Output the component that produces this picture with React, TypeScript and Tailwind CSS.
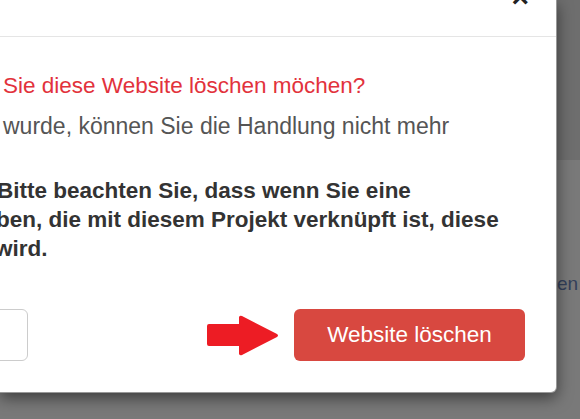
import * as React from "react";

function Arrow() {
  return (
    <svg width="72" height="41" viewBox="0 0 72 41" className="shrink-0">
      <path
        d="M2 9 H32 V2 Q33 0 35 1 L70 19 Q72 20.5 70 22 L35 40 Q33 41 32 39 V31 H2 Q0 31 0 29 V11 Q0 9 2 9 Z"
        fill="#ed1c24"
      />
    </svg>
  );
}

export default function App() {
  return (
    <div className="relative w-[580px] h-[419px] overflow-hidden bg-[#797979] font-['Liberation_Sans',Arial,sans-serif]">
      {/* page behind the overlay */}
      <div className="flex flex-col h-full">
        <div className="h-[160px] bg-[#6e6e6e]" />
        <div className="flex-1 pt-[114px] pl-[557px] text-[19px] leading-none text-[#33405a]">en</div>
      </div>

      {/* modal */}
      <div className="absolute left-0 top-0 w-[557px] h-[393px] bg-white rounded-br-[6px] border-r border-b border-black/40 shadow-[0_5px_15px_rgba(0,0,0,0.5)] flex flex-col">
        <div className="h-[37px] border-b border-[#e5e5e5] flex justify-end pr-[27px] shrink-0">
          <span className="-mt-[18px] text-[30px] font-bold leading-none text-[#222]">×</span>
        </div>

        <div className="pl-[3px] pt-[36px] flex flex-col">
          <p className="text-[22.5px] leading-[26px] text-[#e2323c] whitespace-nowrap">
            Sie diese Website löschen möchen?
          </p>
          <p className="mt-[14px] text-[23px] leading-[26px] text-[#555] whitespace-nowrap">
            wurde, können Sie die Handlung nicht mehr
          </p>
        </div>

        <div className="mt-[37px] flex flex-col text-[22.5px] leading-[29px] font-bold text-[#333] whitespace-nowrap">
          <p className="-ml-[3px]">Bitte beachten Sie, dass wenn Sie eine</p>
          <p className="-ml-[4px]">ben, die mit diesem Projekt verknüpft ist, diese</p>
          <p className="-ml-[5px]">wird.</p>
        </div>

        <div className="mt-[46px] flex items-center">
          <div className="w-[34px] h-[52px] -ml-[6px] border border-[#cccccc] rounded-[6px] shrink-0" />
          <div className="ml-[179px]">
            <Arrow />
          </div>
          <button className="ml-[15px] w-[231px] h-[52px] rounded-[6px] bg-[#d84840] text-white text-[22.5px]">
            Website löschen
          </button>
        </div>
      </div>
    </div>
  );
}
